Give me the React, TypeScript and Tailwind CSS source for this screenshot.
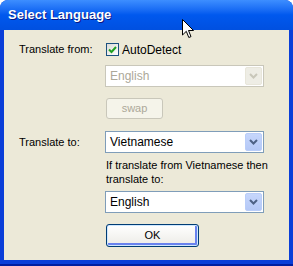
import React from 'react';

const font = { fontFamily: '"Liberation Sans", Arial, sans-serif' };

function Chevron({ disabled }: { disabled?: boolean }) {
  return (
    <svg width="9" height="6" viewBox="0 0 9 6">
      <polyline
        points="1,1 4.5,4.5 8,1"
        fill="none"
        stroke={disabled ? '#C9C7BA' : '#4D6185'}
        strokeWidth="2"
      />
    </svg>
  );
}

function Select({ value, disabled }: { value: string; disabled?: boolean }) {
  return (
    <div
      className={`flex h-[22px] w-[159px] items-center border bg-white p-px ${
        disabled ? 'border-[#C9C7BA]' : 'border-[#7F9DB9]'
      }`}
    >
      <span className={`flex-1 pl-[3px] text-[12px] ${disabled ? 'text-[#ACA899]' : 'text-black'}`}>
        {value}
      </span>
      <div
        className={`flex h-[18px] w-[17px] items-center justify-center rounded-[2px] border ${
          disabled
            ? 'border-[#E8E6DA] bg-[#EEEDE5]'
            : 'border-[#B9CDF9] bg-gradient-to-b from-[#C6D6FC] to-[#B4C8F6]'
        }`}
      >
        <Chevron disabled={disabled} />
      </div>
    </div>
  );
}

function Cursor() {
  return (
    <svg className="absolute left-[182px] top-[19px]" width="13" height="20" viewBox="0 0 13 20">
      <path
        d="M0.5 0.5 L0.5 16 L4.3 12.3 L6.8 18.5 L9 17.6 L6.5 11.5 L11.5 11.5 Z"
        fill="white"
        stroke="black"
        strokeWidth="1"
      />
    </svg>
  );
}

export default function App() {
  return (
    <div className="relative h-[266px] w-[293px] bg-white" style={font}>
      <div className="flex h-full w-full flex-col overflow-hidden rounded-t-[8px] bg-[#0A3ED8]">
        <div className="flex h-[30px] shrink-0 items-center bg-gradient-to-b from-[#3D8EFF] via-[#0058EE] to-[#0050E0] pl-[8px]">
          <span className="text-[13px] font-bold text-white [text-shadow:1px_1px_0_#0A1883]">
            Select Language
          </span>
        </div>
        <div className="mx-[4px] flex h-[230px] flex-col bg-[#ECE9D8] pl-[15px] pt-[13px] text-[11px] text-black">
          <div className="flex h-[13px] items-center">
            <span className="w-[86px]">Translate from:</span>
            <div className="ml-px flex items-center">
              <div className="flex h-[13px] w-[13px] items-center justify-center border border-[#1C5180] bg-gradient-to-br from-[#DCDCD7] to-white">
                <svg width="9" height="8" viewBox="0 0 9 8">
                  <polyline points="1,3.5 3.5,6 8,1" fill="none" stroke="#21A121" strokeWidth="2" />
                </svg>
              </div>
              <span className="ml-[3px] text-[12px]">AutoDetect</span>
            </div>
          </div>
          <div className="ml-[86px] mt-[9px]">
            <Select value="English" disabled />
          </div>
          <div className="ml-[87px] mt-[11px] flex h-[21px] w-[57px] items-center justify-center rounded-[3px] border border-[#C9C7BA] bg-[#F5F4EA] text-[#ACA899]">
            swap
          </div>
          <div className="mt-[12px] flex items-center">
            <span className="w-[86px]">Translate to:</span>
            <Select value="Vietnamese" />
          </div>
          <div className="ml-[87px] mt-[5px] leading-[14px]">
            If translate from Vietnamese then
            <br />
            translate to:
          </div>
          <div className="ml-[86px] mt-[5px]">
            <Select value="English" />
          </div>
          <div className="ml-[87px] mt-[11px] flex h-[23px] w-[93px] items-center justify-center rounded-[3px] border border-[#003C74] bg-gradient-to-b from-white to-[#ECEBE6] shadow-[inset_0_0_0_1px_#CEE7FF,inset_-1px_-1px_0_2px_#6982EE]">
            OK
          </div>
        </div>
        <div className="mt-auto h-[6px] border-b-2 border-[#001EA0]" />
      </div>
      <Cursor />
    </div>
  );
}
